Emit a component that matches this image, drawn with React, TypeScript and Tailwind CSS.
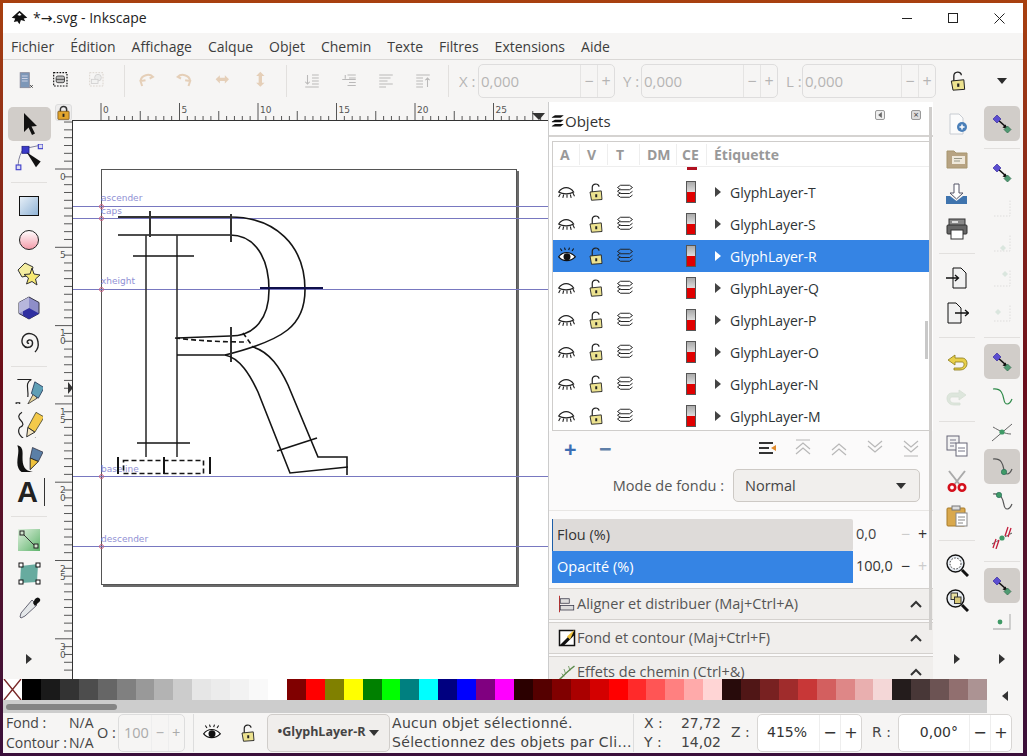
import React from 'react';

const ui = "font-['Open_Sans','Noto_Sans',sans-serif]";
const deja = "font-['DejaVu_Sans',sans-serif]";

function Ico({ size = 24, className = '', children }: { size?: number; className?: string; children: React.ReactNode }) {
  return (
    <svg width={size} height={size} viewBox="0 0 24 24" fill="none" className={className}>
      {children}
    </svg>
  );
}

/* ---- tool icons ---- */
const SelectIcon = () => (
  <Ico><path d="M7 1 L7 20 L11.5 15.5 L15 23 L18 21.5 L14.5 14.5 L20 14 Z" fill="#111" /></Ico>
);
const NodeIcon = () => (
  <Ico size={28}>
    <path d="M8 4 L22 1 M6 6 Q2 14 3 20" stroke="#668" strokeWidth="0.7" />
    <rect x="6" y="2" width="6" height="6" fill="#3a3ac8" stroke="#228" strokeWidth="0.7" />
    <rect x="20" y="0" width="4" height="4" fill="#dde" stroke="#44c" />
    <rect x="1" y="18" width="4" height="4" fill="#dde" stroke="#44c" />
    <path d="M10 7 L22 15 L18 20 Z" fill="#111" />
  </Ico>
);
const RectIcon = () => (
  <Ico>
    <defs>
      <linearGradient id="rg" x1="0" y1="0" x2="1" y2="1"><stop stopColor="#e8f0f8" /><stop offset="1" stopColor="#8fb3d6" /></linearGradient>
    </defs>
    <rect x="2.5" y="2.5" width="19" height="19" fill="url(#rg)" stroke="#111" />
  </Ico>
);
const EllipseIcon = () => (
  <Ico>
    <defs>
      <linearGradient id="eg" x1="0" y1="0" x2="0" y2="1"><stop stopColor="#fff" /><stop offset="1" stopColor="#f39aa8" /></linearGradient>
    </defs>
    <circle cx="12" cy="12" r="9.5" fill="url(#eg)" stroke="#222" />
  </Ico>
);
const StarIcon = () => (
  <Ico>
    <path d="M8 1 L16 5 L14 13 L5 15 L1 8 Z" fill="#f4eda0" stroke="#333" />
    <path d="M15 6 L17 12 L23 13 L18.5 17 L20 23 L15 19.5 L9.5 22 L11.5 16 L7 12.5 L13 12 Z" fill="#f6e873" stroke="#333" />
  </Ico>
);
const BoxIcon = () => (
  <Ico>
    <path d="M12 1 L22 6.5 L22 17.5 L12 23 L2 17.5 L2 6.5 Z" fill="#8e8ec8" stroke="#334" />
    <path d="M12 12 L22 17.5 L12 23 L6 19.5 L6 14 Z" fill="#2f2fa0" />
    <path d="M12 1 L12 12 L2 17.5 L2 6.5 Z" fill="#b7b7dc" />
  </Ico>
);
const SpiralIcon = () => (
  <Ico>
    <path d="M12 13 C10 14 9 11 12 10 C16 9 17 15 13 17 C7 19 3 13 6 7 C10 1 20 3 21 12 C22 17 20 20 18 22" stroke="#222" strokeWidth="1.4" />
  </Ico>
);
const PenIcon = () => (
  <Ico size={28}>
    <path d="M2 3 L14 3 C8 6 12 12 11 18" stroke="#222" />
    <path d="M16 15 L11 24 L19 19 Z" fill="#e8d79c" stroke="#333" strokeWidth="0.7" />
    <path d="M17 5 L25 10 L20 19 L14 15 Z" fill="#5f9fb5" stroke="#235" strokeWidth="0.7" />
    <rect x="1" y="23" width="3" height="3" fill="#fff" stroke="#222" />
    <path d="M4 25 L11 25" stroke="#222" />
  </Ico>
);
const PencilIcon = () => (
  <Ico size={28}>
    <path d="M6 2 Q1 5 5 9 Q9 13 4 15 Q1 20 8 25 Q14 26 18 24" stroke="#222" />
    <path d="M18 2 L25 6 L17 19 L11 15 Z" fill="#f3c94a" stroke="#443" strokeWidth="0.7" />
    <path d="M11 15 L17 19 L10 23 Z" fill="#f5e6c0" stroke="#222" strokeWidth="0.8" />
  </Ico>
);
const CalligraphyIcon = () => (
  <Ico size={28}>
    <path d="M2 1 C10 3 4 12 8 20 C10 24 16 24 22 25 C12 28 2 26 2 16 C2 10 4 6 2 1 Z" fill="#111" />
    <path d="M15 3 L24 7 L20 15 L13 12 Z" fill="#5b7fa6" stroke="#223" strokeWidth="0.6" />
    <path d="M13 12 L20 15 L13 22 Z" fill="#efc23c" stroke="#222" strokeWidth="0.8" />
  </Ico>
);
const TextIcon = () => (
  <div className="relative w-[24px] h-[24px]">
    <span className="font-['Liberation_Sans',sans-serif] text-[29px] font-bold text-[#222] leading-[24px]">A</span>
    <span className="absolute right-[-4px] top-[-2px] w-[1px] h-[28px] bg-[#333]" />
  </div>
);
const GradientIcon = () => (
  <Ico>
    <defs>
      <linearGradient id="gg" x1="0" y1="0" x2="1" y2="1"><stop stopColor="#dff0de" /><stop offset="1" stopColor="#5eb36b" /></linearGradient>
    </defs>
    <rect x="1" y="1" width="22" height="22" fill="url(#gg)" />
    <path d="M5 5 L19 19" stroke="#333" />
    <rect x="3" y="3" width="4" height="4" fill="#cfe3cc" stroke="#222" />
    <rect x="17" y="16" width="4" height="4" fill="#cfe3cc" stroke="#222" />
  </Ico>
);
const MeshIcon = () => (
  <Ico>
    <path d="M4 4 L21 2 L20 20 L3 21 Z" fill="#67ab9f" />
    <rect x="2" y="1" width="4" height="4" fill="#fff" stroke="#111" />
    <rect x="19" y="1" width="4" height="4" fill="#fff" stroke="#111" />
    <rect x="2" y="18" width="4" height="4" fill="#fff" stroke="#111" />
    <rect x="19" y="18" width="4" height="4" fill="#fff" stroke="#111" />
  </Ico>
);
const DropperIcon = () => (
  <Ico>
    <path d="M15 4 L20 9 L8 20 L4 22 L3 21 L4 17 Z" fill="#e4e7e9" stroke="#445" strokeWidth="0.8" />
    <path d="M16 7 L18 3 Q21 0 23 3 Q24 5 21 7 L18 10 Z" fill="#111" />
  </Ico>
);

/* ---- right hand columns ---- */
const NewDocIcon = () => (
  <Ico>
    <path d="M5 2 H14 L18 6 V22 H5 Z" fill="#fbfbfb" stroke="#c8ccd2" />
    <circle cx="17" cy="15" r="5" fill="#4a7fb8" />
    <path d="M14.5 15 H19.5 M17 12.5 V17.5" stroke="#fff" strokeWidth="1.5" />
  </Ico>
);
const OpenIcon = () => (
  <Ico>
    <path d="M2 4 H9 L11 6 H22 V21 H2 Z" fill="#b7a382" stroke="#a8966f" />
    <rect x="7" y="9" width="13" height="8" fill="#efe8da" />
    <path d="M9 11.5 H17 M9 14 H15" stroke="#998" />
  </Ico>
);
const SaveIcon = () => (
  <Ico>
    <path d="M9 2 H14 V11 H18 L11.5 17 L5 11 H9 Z" fill="#fff" stroke="#556" />
    <path d="M1 14 H5 L11.5 19 L18 14 H22 V22 H1 Z" fill="#3f74ae" />
  </Ico>
);
const PrintIcon = () => (
  <Ico>
    <rect x="4" y="2" width="16" height="7" fill="#888" stroke="#333" />
    <rect x="2" y="8" width="20" height="9" rx="1" fill="#666" stroke="#333" />
    <rect x="6" y="13" width="12" height="9" fill="#fff" stroke="#333" />
    <rect x="7" y="4" width="6" height="2" fill="#ddd" />
  </Ico>
);
const ImportIcon = () => (
  <Ico>
    <path d="M8 2 H16 L21 7 V22 H8 Z" fill="#f1f1f1" stroke="#111" />
    <path d="M1 12 H13 M10 9 L13.5 12 L10 15" stroke="#111" strokeWidth="1.3" />
  </Ico>
);
const ExportIcon = () => (
  <Ico>
    <path d="M3 2 H11 L16 7 V22 H3 Z" fill="#f1f1f1" stroke="#111" />
    <path d="M10 12 H23 M20 9 L23.5 12 L20 15" stroke="#111" strokeWidth="1.3" />
  </Ico>
);
const UndoIcon = ({ faded = false }: { faded?: boolean }) => (
  <Ico className={faded ? 'opacity-20 -scale-x-100' : ''}>
    <path d="M10 5 L3 10 L10 15 V12 H17 C20 12 20 18 15 18 H9 V20 H15 C24 20 24 8 17 8 H10 Z" fill={faded ? '#7fae7f' : '#e8cf4a'} stroke={faded ? '#5c8d5c' : '#8a7a18'} strokeWidth="0.8" />
  </Ico>
);
const CopyIcon = () => (
  <Ico>
    <rect x="2" y="2" width="12" height="14" fill="#f2f2f2" stroke="#667" />
    <path d="M5 6 H11 M5 9 H11 M5 12 H9" stroke="#778" />
    <rect x="11" y="9" width="11" height="13" fill="#fff" stroke="#667" />
    <path d="M13 14 H20 M13 17 H20" stroke="#778" />
  </Ico>
);
const CutIcon = () => (
  <Ico>
    <path d="M4 2 L15 16 M20 2 L9 16" stroke="#aaa" strokeWidth="2" />
    <circle cx="7" cy="18.5" r="3.2" fill="#fff" stroke="#d4101c" strokeWidth="2.6" />
    <circle cx="17" cy="18.5" r="3.2" fill="#fff" stroke="#d4101c" strokeWidth="2.6" />
  </Ico>
);
const PasteIcon = () => (
  <Ico>
    <rect x="2" y="4" width="18" height="18" rx="1" fill="#d9a84c" stroke="#a87a28" />
    <rect x="7" y="2" width="8" height="4" fill="#ddd" stroke="#777" />
    <rect x="11" y="9" width="11" height="13" fill="#fff" stroke="#888" />
    <path d="M13 13 H20 M13 16 H20 M13 19 H18" stroke="#888" />
  </Ico>
);
const ZoomFitIcon = () => (
  <Ico>
    <circle cx="10.5" cy="10.5" r="8.5" fill="#e8edf3" stroke="#111" strokeWidth="1.4" />
    <circle cx="10.5" cy="10.5" r="5.5" fill="#fff" stroke="#333" strokeDasharray="1.5 1.5" />
    <path d="M17 17 L23 23" stroke="#111" strokeWidth="3" />
  </Ico>
);
const ZoomObjIcon = () => (
  <Ico>
    <circle cx="10.5" cy="10.5" r="8.5" fill="#e8edf3" stroke="#111" strokeWidth="1.4" />
    <rect x="6" y="5" width="6.5" height="6.5" fill="#e8dfa0" stroke="#333" />
    <rect x="9.5" y="9" width="6.5" height="6.5" fill="#d8c878" stroke="#333" />
    <path d="M17 17 L23 23" stroke="#111" strokeWidth="3" />
  </Ico>
);
const SnapIcon = () => (
  <Ico>
    <path d="M7 7 L16 15" stroke="#111" strokeWidth="1.6" />
    <path d="M17.5 17 L12.5 15.5 L15.5 12.5 Z" fill="#111" />
    <path d="M7 3 L11 7 L7 11 L3 7 Z" fill="#5b4ed0" stroke="#3b2ea0" strokeWidth="0.7" />
    <path d="M17.5 14 L21 17.5 L17.5 21 L14 17.5 Z" fill="#4f9a72" stroke="#2f6a4a" strokeWidth="0.7" />
  </Ico>
);
const FaintSnap = ({ d }: { d: string }) => (
  <Ico className="opacity-30">
    <path d="M4 20 H20 V4" stroke="#aaa" strokeDasharray="1.5 1.5" />
    <path d={d} fill="#9cc4ae" />
  </Ico>
);
const CurveIcon = ({ dot }: { dot?: [number, number] }) => (
  <Ico>
    <path d="M3 4 C12 3 13 10 14 15 C15 20 19 21 22 14" stroke={dot ? '#555' : '#2f8a4a'} strokeWidth="1.2" />
    {dot && <circle cx={dot[0]} cy={dot[1]} r="2.7" fill="#3f9a66" stroke="#265" strokeWidth="0.6" />}
  </Ico>
);
const CrossSnapIcon = () => (
  <Ico>
    <path d="M2 21 L22 4 M3 7 C10 11 15 14 21 14" stroke="#666" />
    <circle cx="12" cy="12" r="2.6" fill="#3f9a66" />
  </Ico>
);
const HashSnapIcon = () => (
  <Ico>
    <path d="M2 19 L22 8" stroke="#555" strokeDasharray="3 2" />
    <circle cx="12" cy="13" r="2.6" fill="#3f9a66" />
    <path d="M6 14 L3 23 M9 15 L6 24 M18 2 L15 11 M21 3 L18 12" stroke="#c21d3a" strokeWidth="1.3" />
  </Ico>
);
const CornerSnapIcon = () => (
  <Ico>
    <path d="M3 20 H20 V5" stroke="#bbb" strokeWidth="1.3" />
    <circle cx="10" cy="13" r="2.4" fill="#3f9a66" />
  </Ico>
);

/* ---- small bits ---- */
const LockOpen = ({ size = 20 }: { size?: number }) => (
  <Ico size={size}>
    <path d="M7 12 V6 C7 0 16 0 16 5" stroke="#222" strokeWidth="1.6" />
    <path d="M4 12 L19 10.5 L20 22 L6 23 Z" fill="#ece28f" stroke="#222" strokeWidth="1.2" />
    <rect x="11" y="15" width="2.6" height="4" fill="#222" />
  </Ico>
);
const LockClosed = () => (
  <Ico size={15}>
    <path d="M7 11 V7 C7 1 17 1 17 7 V11" stroke="#333" strokeWidth="2.4" />
    <rect x="3" y="10" width="18" height="13" rx="1" fill="#e2a52d" stroke="#5c3a08" />
    <rect x="10.5" y="14" width="3" height="5" fill="#222" />
  </Ico>
);
const EyeClosed = () => (
  <Ico size={20}>
    <path d="M2 12 C7 5 15 5 20 12 C15 15 7 15 2 12 Z" fill="#fff" stroke="#222" strokeWidth="1.4" />
    <path d="M4 14 L2 18 M8 15 L7 19 M12 15 L12 19 M16 15 L17 19 M19 13 L21 17" stroke="#222" strokeWidth="1.3" />
  </Ico>
);
const EyeOpen = () => (
  <Ico size={20}>
    <path d="M2 13 C7 6 16 6 22 13 C16 19 7 19 2 13 Z" fill="#fff" stroke="#111" strokeWidth="1.4" />
    <circle cx="12" cy="13" r="4.2" fill="#111" />
    <path d="M6 6 L4 3 M10 5 L9 2 M14 5 L15 2 M18 6 L20 3" stroke="#111" strokeWidth="1.3" />
  </Ico>
);
const LayersIcon = () => (
  <Ico size={18}>
    <path d="M2 6 L6 3 H18 L22 6 L18 9 H6 Z M2 11 L6 8 M22 11 L18 14 H6 L2 11 M2 16 L6 13 M22 16 L18 19 H6 L2 16" fill="none" stroke="#222" strokeWidth="1.3" />
  </Ico>
);
const Tri = ({ dir = 'right', className = '' }: { dir?: 'right' | 'left' | 'down'; className?: string }) => {
  const pts = dir === 'right' ? '2,0 8,5 2,10' : dir === 'left' ? '8,0 2,5 8,10' : '0,2 10,2 5,8';
  return (
    <svg width="10" height="10" viewBox="0 0 10 10" className={className}>
      <polygon points={pts} fill="currentColor" />
    </svg>
  );
};
const Chevron = () => (
  <svg width="12" height="8" viewBox="0 0 12 8" fill="none"><path d="M1 7 L6 2 L11 7" stroke="#333" strokeWidth="2" /></svg>
);

const ToolBtn = ({ h = 34, active = false, children }: { h?: 34 | 35; active?: boolean; children: React.ReactNode }) => (
  <div className={`flex items-center justify-center shrink-0 ${h === 34 ? 'h-[34px] w-[43px]' : 'h-[35px] w-[36px]'} ${active ? 'bg-[#d1cdc9] rounded-[5px]' : ''}`}>
    {children}
  </div>
);
const Sep = () => (
  <div className="h-[14px] shrink-0 flex items-center w-[36px]"><div className="h-[1px] w-full bg-[#e2e0de]" /></div>
);

function Spin({ label, labelW, w }: { label: string; labelW: string; w: string }) {
  return (
    <div className="flex items-center shrink-0 opacity-40">
      <span className={`${labelW} text-[15px] text-[#555] whitespace-nowrap`}>{label}</span>
      <div className={`${w} h-[34px] border border-[#bbb] rounded-[5px] flex items-center text-[15px] text-[#555]`}>
        <span className="flex-1 pl-[2px]">0,000</span>
        <span className="w-[17px] h-full border-l border-[#ccc] flex items-center justify-center text-[16px]">−</span>
        <span className="w-[17px] h-full border-l border-[#ccc] flex items-center justify-center text-[16px]">+</span>
      </div>
    </div>
  );
}

function ToolbarIcon({ children, className = 'w-[36px]' }: { children: React.ReactNode; className?: string }) {
  return <div className={`${className} shrink-0 flex justify-center`}>{children}</div>;
}

/* ---- rulers ---- */
function TopRuler() {
  const ticks = Array.from({ length: 60 }, (_, i) => 101 + i * 7.85);
  return (
    <svg width="476" height="19" viewBox="72 102 476 19" className="block">
      {ticks.map((x, i) => (
        <line key={i} x1={x} x2={x} y1={i % 10 === 0 ? 103 : i % 5 === 0 ? 111 : 116} y2="121" stroke="#444" strokeWidth="0.9" />
      ))}
      {[0, 5, 10, 15, 20, 25].map((n, i) => (
        <text key={n} x={103 + i * 78.5} y="113" fontSize="9" fill="#555" fontFamily="DejaVu Sans">{n}</text>
      ))}
      <path d="M532 113 L545 113 L539 120 Z" fill="#333" />
      <line x1="72" x2="548" y1="120.5" y2="120.5" stroke="#333" />
    </svg>
  );
}

function LeftRuler() {
  const ticks = Array.from({ length: 71 }, (_, i) => 122.02 + i * 7.83);
  return (
    <svg width="18" height="558" viewBox="55 121 18 558" className="block">
      {ticks.map((y, i) => (
        <line key={i} x1={(i - 6) % 10 === 0 ? 55 : 64} x2="72" y1={y} y2={y} stroke="#444" strokeWidth="0.9" />
      ))}
      <text x="60" y="180" fontSize="9" fill="#555" fontFamily="DejaVu Sans">0</text>
      <text x="60" y="258" fontSize="9" fill="#555" fontFamily="DejaVu Sans">5</text>
      {[['1', '0', 325], ['1', '5', 404], ['2', '0', 482], ['2', '5', 561], ['3', '0', 639]].map(([a, b, y]) => (
        <text key={`${a}${b}`} fontSize="9" fill="#555" fontFamily="DejaVu Sans">
          <tspan x="60" y={Number(y) + 11}>{a}</tspan>
          <tspan x="60" y={Number(y) + 19}>{b}</tspan>
        </text>
      ))}
      <path d="M68 382 L73 388 L68 394 Z" fill="#333" />
      <line x1="72.5" x2="72.5" y1="121" y2="679" stroke="#333" />
    </svg>
  );
}

/* ---- the glyph on the page, in page coordinates ---- */
function CanvasDrawing() {
  const guides: [string, number, number][] = [
    ['ascender', 206.5, 201],
    ['caps', 218.5, 214],
    ['xheight', 289.5, 284],
    ['baseline', 476.5, 472],
    ['descender', 546.5, 542],
  ];
  const ink = { stroke: '#151515', fill: 'none' };
  return (
    <svg width="475" height="558" viewBox="73 121 475 558" className="block bg-white">
      <rect x="103" y="171" width="416" height="416" fill="#6a6a6a" />
      <rect x="101.5" y="169.5" width="415" height="415" fill="#fff" stroke="#555" />
      {guides.map(([name, y, ty]) => (
        <g key={name}>
          <line x1="73" x2="548" y1={y} y2={y} stroke="#7878c0" />
          <circle cx="101.5" cy={y} r="2" fill="none" stroke="#cc6688" />
          <text x="101" y={ty} fontSize="9" fill="#9090d4" fontFamily="DejaVu Sans">{name}</text>
        </g>
      ))}
      <g {...ink} strokeWidth="1.6">
        <path d="M118 217 H230" strokeWidth="2.2" stroke="#333" />
        <path d="M230 217 C275 217 305 245 305 290 C305 325 285 340 225 355" />
        <path d="M118 235 H230 C255 235 269 258 269 290 C269 318 255 336 230 336 L177 338" />
        <path d="M146 235 V457 M177 235 V457" stroke="#333" />
        <path d="M133 256 H194 M137 443 H190" />
        <path d="M150 211 V237 M231 214 V242 M231 327 V362" strokeWidth="2" stroke="#333" />
        <path d="M260 288 H323" stroke="#10104a" strokeWidth="2" />
        <path d="M177 355 H225 C240 358 250 375 258 392 L290 473 L348 467" />
        <path d="M253 347 C270 352 280 368 288 385 L318 457 H347 V475" />
        <path d="M277 451 L317 438" />
        <path d="M175 338 C200 341 225 342 247 342 M243 333 L253 347" strokeDasharray="5 3" />
        <rect x="123.5" y="460.5" width="80" height="13" strokeDasharray="5 3" />
        <path d="M118 457 V474 M164 457 V474 M210 457 V474" strokeWidth="2" />
      </g>
    </svg>
  );
}

/* ---- objects panel ---- */
const layers = ['T', 'S', 'R', 'Q', 'P', 'O', 'N', 'M'];

function LayerRow({ name }: { name: string }) {
  const sel = name === 'R';
  return (
    <div className={`flex items-center h-[32px] shrink-0 ${sel ? 'bg-[#3584e4] text-white' : 'text-[#2e3436]'}`}>
      <div className="w-[28px] flex justify-center">{sel ? <EyeOpen /> : <EyeClosed />}</div>
      <div className="w-[29px] flex justify-center"><LockOpen size={18} /></div>
      <div className="w-[29px] flex justify-center"><LayersIcon /></div>
      <div className="w-[37px]" />
      <div className="w-[30px] flex justify-center">
        <div className="w-[10px] h-[22px] border border-[#555] flex flex-col">
          <div className="flex-1 bg-gradient-to-b from-[#aaa] to-[#ddd]" />
          <div className="flex-1 bg-[#e00000]" />
        </div>
      </div>
      <div className={`w-[24px] pl-[7px] ${sel ? 'text-white' : 'text-[#444]'}`}><Tri /></div>
      <span className="text-[14px]">GlyphLayer-{name}</span>
    </div>
  );
}

function Accordion({ icon, label, h = 'h-[32px]' }: { icon: React.ReactNode; label: string; h?: string }) {
  return (
    <div className={`${h} shrink-0 bg-[#f0eeec] border-t border-b border-[#d4d1ce] flex items-center pl-[9px] pr-[11px] text-[#555] text-[14.5px] overflow-hidden`}>
      <span className="mr-[1px]">{icon}</span>
      <span className="flex-1 whitespace-nowrap">{label}</span>
      <Chevron />
    </div>
  );
}

function ObjectsPanel() {
  return (
    <div className={`w-[385px] shrink-0 border-l border-[#ccc] flex flex-col relative overflow-hidden bg-[#f6f5f4] ${ui}`}>
      <div className="h-[35px] shrink-0 flex items-center pl-[1px] pt-[5px] bg-white text-[#333] text-[15px] border-b-2 border-[#d5d3d1]">
        <Ico size={15}><path d="M3 5 L8 2 H22 L17 6 H3 Z M3 12 L8 9 H22 L17 13 H3 Z M3 19 L8 16 H22 L17 20 H3 Z" fill="#111" /></Ico>
        <span>Objets</span>
        <div className="ml-auto flex items-center gap-[26px] pr-[12px] pb-[12px]">
          <div className="w-[10px] h-[10px] border border-[#999] rounded-[2px] bg-[#eee] flex items-center justify-center text-[#666]"><Tri dir="left" className="w-[6px] h-[6px]" /></div>
          <div className="w-[10px] h-[10px] border border-[#999] rounded-[2px] bg-[#ddd] text-[#444] text-[9px] leading-[8px] text-center">×</div>
        </div>
      </div>
      <div className="bg-white pl-[3px] pr-[4px] pt-[4px] pb-0 shrink-0">
        <div className="border border-[#cfcdcb] h-[290px] overflow-hidden bg-white w-[378px]">
          <div className="flex items-center h-[25px] border-b border-[#eee] text-[14px] font-bold text-[#999]">
            <span className="w-[26px] pl-[7px]">A</span>
            <span className="w-[28px] pl-[7px] border-l border-[#eee]">V</span>
            <span className="w-[32px] pl-[8px] border-l border-[#eee]">T</span>
            <span className="w-[37px] pl-[7px] border-l border-[#eee]">DM</span>
            <span className="w-[30px] pl-[5px] border-l border-[#eee]">CE</span>
            <span className="pl-[7px] border-l border-[#eee]">Étiquette</span>
          </div>
          <div className="h-[9px] overflow-hidden">
            <div className="ml-[134px] w-[10px] h-[3px] bg-[#b01020]" />
          </div>
          {layers.map((l) => <LayerRow key={l} name={l} />)}
        </div>
      </div>
      <div className="flex-1 min-h-0 flex flex-col bg-[#fbfafa] text-[#444]">
        <div className="h-[34px] shrink-0 flex items-center pl-[15px] pr-[10px]">
          <span className="w-[35px] text-[#3c6eb4] text-[22px] font-bold leading-none">+</span>
          <span className="text-[#5f7fa8] text-[22px] font-bold leading-none">−</span>
          <div className="ml-auto flex items-center gap-[12px]">
            <Ico><path d="M4 7 H18 M4 12 H14 M4 17 H18" stroke="#333" strokeWidth="2" /><path d="M21 9 L16 12 L21 15 Z" fill="#e08a2c" /></Ico>
            <Ico className="opacity-50"><path d="M5 4 H19 M5 13 L12 7 L19 13 M5 18 L12 12 L19 18" stroke="#777" strokeWidth="1.2" /></Ico>
            <Ico className="opacity-50"><path d="M5 14 L12 8 L19 14 M5 19 L12 13 L19 19" stroke="#777" strokeWidth="1.2" /></Ico>
            <Ico className="opacity-50"><path d="M5 5 L12 11 L19 5 M5 10 L12 16 L19 10" stroke="#777" strokeWidth="1.2" /></Ico>
            <Ico className="opacity-50"><path d="M5 5 L12 11 L19 5 M5 10 L12 16 L19 10 M5 20 H19" stroke="#777" strokeWidth="1.2" /></Ico>
          </div>
        </div>
        <div className="shrink-0 flex items-center justify-end pr-[13px] pb-[8px] mt-[4px] border-b border-[#e8e6e4]">
          <span className="text-[#555] text-[14.5px] mr-[9px]">Mode de fondu :</span>
          <div className="w-[187px] h-[33px] border border-[#cdc9c5] rounded-[5px] bg-[#f1efed] flex items-center pl-[11px] pr-[13px]">
            <span className="flex-1 text-[14.5px]">Normal</span>
            <Tri dir="down" className="text-[#333]" />
          </div>
        </div>
        <div className="pl-[3px] pt-[8px] flex flex-col shrink-0">
          <div className="flex h-[32px]">
            <div className="w-[301px] shrink-0 bg-[#dedbd9] border-l border-[#1c5ea8] rounded-r-[2px] flex items-center pl-[4px] text-[14.5px] text-[#333]">Flou (%)</div>
            <span className="w-[44px] shrink-0 pl-[3px] text-[14.5px] leading-[30px]">0,0</span>
            <span className="w-[17px] text-center text-[#ccc] text-[16px] leading-[30px]">−</span>
            <span className="w-[17px] text-center text-[#333] text-[16px] leading-[30px]">+</span>
          </div>
          <div className="flex h-[32px]">
            <div className="w-[301px] shrink-0 bg-[#3584e4] flex items-center pl-[5px] text-[14.5px] text-white">Opacité (%)</div>
            <span className="w-[44px] shrink-0 pl-[3px] text-[14.5px] leading-[30px] text-[#333]">100,0</span>
            <span className="w-[17px] text-center text-[#333] text-[16px] leading-[30px]">−</span>
            <span className="w-[17px] text-center text-[#ccc] text-[16px] leading-[30px]">+</span>
          </div>
        </div>
        <div className="flex flex-col gap-[2px] mt-[5px]">
          <Accordion
            label="Aligner et distribuer (Maj+Ctrl+A)"
            icon={<Ico size={18}><path d="M2 1 V23" stroke="#b33" strokeWidth="1.4" /><rect x="3" y="5" width="12" height="6" fill="#ddd" stroke="#334" /><rect x="3" y="14" width="18" height="6" fill="#ddd" stroke="#334" /></Ico>}
          />
          <Accordion
            label="Fond et contour (Maj+Ctrl+F)"
            icon={<Ico size={18}><rect x="2" y="2" width="20" height="20" fill="#fff" stroke="#111" strokeWidth="2" /><path d="M2 22 L22 2 V8 L8 22 Z" fill="#111" /><path d="M12 10 L22 1 L16 14 Z" fill="#efc23c" /></Ico>}
          />
          <Accordion
            label="Effets de chemin (Ctrl+&)"
            h="h-[32px]"
            icon={<Ico size={18}><path d="M2 22 C8 16 14 10 22 4" stroke="#5a8a4a" strokeWidth="2" /><path d="M8 8 L10 14 M14 4 L16 10 M5 14 L8 18" stroke="#5a8a4a" /></Ico>}
          />
        </div>
      </div>
      {/* panel scrollbars lie over the content */}
      <div className="absolute right-[1px] top-[5px] bottom-[49px] w-[3px] bg-[#d0cecc]" />
      <div className="absolute right-[5px] top-[219px] h-[38px] w-[3px] bg-[#c8c8c8]" />
    </div>
  );
}

const palette = [
  '#000000', '#1a1a1a', '#333333', '#4d4d4d', '#666666', '#808080', '#999999', '#b3b3b3', '#cccccc', '#e6e6e6', '#ececec', '#f2f2f2', '#f9f9f9', '#ffffff',
  '#800000', '#ff0000', '#808000', '#ffff00', '#008000', '#00ff00', '#008080', '#00ffff', '#000080', '#0000ff', '#800080', '#ff00ff',
  '#2b0000', '#550000', '#800000', '#aa0000', '#d40000', '#ff0000', '#ff2a2a', '#ff5555', '#ff8080', '#ffaaaa', '#ffd5d5',
  '#280b0b', '#501616', '#782121', '#a02c2c', '#c83737', '#d35f5f', '#de8787', '#e9afaf', '#f4d7d7',
  '#241c1c', '#483737', '#6c5353', '#916f6f', '#ac9393',
];

const menus = ['Fichier', 'Édition', 'Affichage', 'Calque', 'Objet', 'Chemin', 'Texte', 'Filtres', 'Extensions', 'Aide'];

export default function App() {
  return (
    <div className={`w-[1027px] h-[756px] overflow-hidden pt-[3px] pl-[3px] bg-gradient-to-b from-[#a8400f] via-[#6b0d1a] to-[#3a0f3a] ${ui}`}>
      <div className="w-[1020px] h-[750px] flex flex-col bg-[#f6f5f4] overflow-hidden">
        {/* title bar */}
        <div className="h-[30px] shrink-0 bg-white flex items-center pl-[8px] text-[14px] text-[#222]">
          <Ico size={17}><path d="M12 1 L23 11 L18 12 L20 16 L14 14 L12 20 L9 16 L4 17 L6 12 L1 11 Z" fill="#111" /><path d="M9 7 L12 4 L15 7 L12 8 Z" fill="#fff" /></Ico>
          <span className="ml-[5px]">*<span className={deja}>→</span>.svg - Inkscape</span>
          <div className="ml-auto flex items-center gap-[36px] pr-[18px]">
            <div className="w-[10px] h-[1px] bg-[#222]" />
            <div className="w-[10px] h-[10px] border border-[#222]" />
            <svg width="11" height="11" viewBox="0 0 11 11"><path d="M0.5 0.5 L10.5 10.5 M10.5 0.5 L0.5 10.5" stroke="#222" /></svg>
          </div>
        </div>
        {/* menu bar */}
        <div className="h-[27px] shrink-0 flex items-center gap-[16px] pl-[8px] border-b border-[#dad8d6] text-[14px] text-[#3d3d3d]">
          {menus.map((m) => <span key={m}>{m}</span>)}
        </div>
        {/* command bar */}
        <div className="h-[42px] shrink-0 flex items-center pl-[5px]">
          <ToolbarIcon><Ico size={20}><rect x="5" y="2" width="11" height="18" fill="#7d97b8" stroke="#889" /><path d="M7 6 H14 M7 9 H14 M7 12 H14" stroke="#dde" /><path d="M17 17 L20 20 M20 17 L17 20" stroke="#222" /></Ico></ToolbarIcon>
          <ToolbarIcon><Ico size={20}><rect x="2" y="2" width="16" height="16" fill="none" stroke="#111" strokeDasharray="2 1.5" strokeWidth="1.4" /><rect x="5" y="6" width="10" height="8" rx="2" fill="#bbb" stroke="#333" /><path d="M5 10 H15" stroke="#333" /></Ico></ToolbarIcon>
          <ToolbarIcon><Ico size={20} className="opacity-40"><rect x="2" y="2" width="16" height="16" fill="none" stroke="#a98" strokeDasharray="2 1.5" /><circle cx="12" cy="8" r="4" fill="#ddd" stroke="#999" /><rect x="4" y="10" width="8" height="5" fill="#eee" stroke="#999" /></Ico></ToolbarIcon>
          <div className="w-[1px] h-[32px] bg-[#e2e0de] ml-[8px] mr-[5px] shrink-0" />
          <div className="flex gap-[2px] opacity-30">
            <ToolbarIcon><Ico size={20}><path d="M3 12 C4 4 14 3 18 7 L14 9 M5 18 L3 12 L9 11" stroke="#c07a30" strokeWidth="2.4" /></Ico></ToolbarIcon>
            <ToolbarIcon><Ico size={20}><path d="M17 12 C16 4 6 3 2 7 L6 9 M15 18 L17 12 L11 11" stroke="#c07a30" strokeWidth="2.4" /></Ico></ToolbarIcon>
            <ToolbarIcon><Ico size={20}><path d="M2 10 L7 5 V8 H13 V5 L18 10 L13 15 V12 H7 V15 Z" fill="#c07a30" /></Ico></ToolbarIcon>
            <ToolbarIcon><Ico size={20}><path d="M10 1 L15 6 H12 V14 H15 L10 19 L5 14 H8 V6 H5 Z" fill="#c07a30" /></Ico></ToolbarIcon>
          </div>
          <div className="w-[1px] h-[32px] bg-[#e2e0de] ml-[6px] mr-[7px] shrink-0" />
          <div className="flex gap-[1px] opacity-30">
            <ToolbarIcon><Ico size={18}><path d="M12 4 H21 M12 8 H21 M12 12 H21 M12 16 H21 M3 20 H21 M6 4 V16 M3 13 L6 16 L9 13" stroke="#333" strokeWidth="1.4" /></Ico></ToolbarIcon>
            <ToolbarIcon><Ico size={18}><path d="M10 4 H21 M12 8 H21 M3 10 H21 M12 14 H21 M10 18 H21 M7 4 V9" stroke="#333" strokeWidth="1.4" /></Ico></ToolbarIcon>
            <ToolbarIcon><Ico size={18}><path d="M3 4 H21 M3 8 H18 M3 12 H14 M3 16 H21 M3 20 H12" stroke="#333" strokeWidth="1.4" /></Ico></ToolbarIcon>
            <ToolbarIcon><Ico size={18}><path d="M3 4 H21 M3 8 H12 M3 12 H12 M3 16 H12 M3 20 H12 M18 20 V8 M15 11 L18 8 L21 11" stroke="#333" strokeWidth="1.4" /></Ico></ToolbarIcon>
          </div>
          <div className="w-[1px] h-[32px] bg-[#e2e0de] ml-[7px] mr-[10px] shrink-0" />
          <div className="flex items-center gap-[8px] shrink-0">
            <Spin label="X :" labelW="w-[19px]" w="w-[137px]" />
            <Spin label="Y :" labelW="w-[18px]" w="w-[137px]" />
            <Spin label="L :" labelW="w-[16px]" w="w-[134px]" />
          </div>
          <div className="w-[44px] flex justify-center shrink-0"><LockOpen /></div>
          <div className="w-[44px] flex justify-center text-[#2b2b2b] shrink-0"><Tri dir="down" /></div>
        </div>
        {/* main area */}
        <div className="h-[577px] shrink-0 flex">
          <div className="w-[52px] shrink-0 flex flex-col items-center pt-[5px] pb-[3px]">
            <ToolBtn active><SelectIcon /></ToolBtn>
            <ToolBtn><NodeIcon /></ToolBtn>
            <Sep />
            <ToolBtn><RectIcon /></ToolBtn>
            <ToolBtn><EllipseIcon /></ToolBtn>
            <ToolBtn><StarIcon /></ToolBtn>
            <ToolBtn><BoxIcon /></ToolBtn>
            <ToolBtn><SpiralIcon /></ToolBtn>
            <Sep />
            <ToolBtn><PenIcon /></ToolBtn>
            <ToolBtn><PencilIcon /></ToolBtn>
            <ToolBtn><CalligraphyIcon /></ToolBtn>
            <ToolBtn><TextIcon /></ToolBtn>
            <Sep />
            <ToolBtn><GradientIcon /></ToolBtn>
            <ToolBtn><MeshIcon /></ToolBtn>
            <ToolBtn><DropperIcon /></ToolBtn>
            <div className="mt-auto h-[34px] flex items-center text-[#333]"><Tri /></div>
          </div>
          <div className="w-[493px] shrink-0 flex flex-col bg-[#f6f5f4]">
            <div className="flex h-[19px] shrink-0">
              <div className="w-[17px] flex items-end justify-center"><div className="bg-[#eeeded] rounded-[3px] border border-[#ddd] flex"><LockClosed /></div></div>
              <TopRuler />
            </div>
            <div className="flex">
              <LeftRuler />
              <CanvasDrawing />
            </div>
          </div>
          <ObjectsPanel />
          <div className="w-[47px] shrink-0 flex flex-col items-center pt-[4px] pb-[3px]">
            <ToolBtn h={35}><NewDocIcon /></ToolBtn>
            <ToolBtn h={35}><OpenIcon /></ToolBtn>
            <ToolBtn h={35}><SaveIcon /></ToolBtn>
            <ToolBtn h={35}><PrintIcon /></ToolBtn>
            <Sep />
            <ToolBtn h={35}><ImportIcon /></ToolBtn>
            <ToolBtn h={35}><ExportIcon /></ToolBtn>
            <Sep />
            <ToolBtn h={35}><UndoIcon /></ToolBtn>
            <ToolBtn h={35}><UndoIcon faded /></ToolBtn>
            <Sep />
            <ToolBtn h={35}><CopyIcon /></ToolBtn>
            <ToolBtn h={35}><CutIcon /></ToolBtn>
            <ToolBtn h={35}><PasteIcon /></ToolBtn>
            <Sep />
            <ToolBtn h={35}><ZoomFitIcon /></ToolBtn>
            <ToolBtn h={35}><ZoomObjIcon /></ToolBtn>
            <div className="mt-auto h-[34px] flex items-center text-[#333]"><Tri /></div>
          </div>
          <div className="w-[43px] shrink-0 flex flex-col items-center pt-[4px] pb-[3px]">
            <ToolBtn h={35} active><SnapIcon /></ToolBtn>
            <Sep />
            <ToolBtn h={35}><SnapIcon /></ToolBtn>
            <ToolBtn h={35}><FaintSnap d="M0 0" /></ToolBtn>
            <ToolBtn h={35}><FaintSnap d="M13 14 L16 17 L13 20 L10 17 Z" /></ToolBtn>
            <ToolBtn h={35}><FaintSnap d="M15 5 L18 8 L15 11 L12 8 Z" /></ToolBtn>
            <ToolBtn h={35}><FaintSnap d="M8 8 L11 11 L8 14 L5 11 Z" /></ToolBtn>
            <Sep />
            <ToolBtn h={35} active><SnapIcon /></ToolBtn>
            <ToolBtn h={35}><CurveIcon /></ToolBtn>
            <ToolBtn h={35}><CrossSnapIcon /></ToolBtn>
            <ToolBtn h={35} active><CurveIcon dot={[14, 17]} /></ToolBtn>
            <ToolBtn h={35}><CurveIcon dot={[9, 5]} /></ToolBtn>
            <ToolBtn h={35}><HashSnapIcon /></ToolBtn>
            <Sep />
            <ToolBtn h={35} active><SnapIcon /></ToolBtn>
            <ToolBtn h={35}><CornerSnapIcon /></ToolBtn>
            <div className="mt-auto h-[34px] flex items-center text-[#333]"><Tri /></div>
          </div>
        </div>
        {/* palette and scrollbar */}
        <div className="h-[34px] shrink-0 flex">
          <div className="w-[984px] flex flex-col">
            <div className="h-[21px] flex">
              <div className="w-[19px] shrink-0 bg-white">
                <svg width="19" height="21" viewBox="0 0 19 21"><path d="M1 0 L18 21 M18 0 L1 21" stroke="#7a2a2a" strokeWidth="1.4" /></svg>
              </div>
              {palette.map((c, i) => <div key={i} className="flex-1" style={{ backgroundColor: c }} />)}
            </div>
            <div className="h-[13px] bg-[#cdcdcd] flex items-center pl-[3px]">
              <div className="w-[111px] h-[6px] rounded-full bg-[#858585]" />
            </div>
          </div>
          <div className="flex-1 flex items-center justify-center text-[#333]"><Tri dir="left" /></div>
        </div>
        {/* status bar */}
        <div className="h-[39px] shrink-0 flex items-center text-[#444] overflow-hidden">
          <div className="w-[94px] shrink-0 pl-[3px] text-[14px] leading-[20px] whitespace-nowrap">
            <div className="flex"><span className="w-[63px]">Fond :</span><span>N/A</span></div>
            <div className="flex"><span className="w-[63px]">Contour :</span><span>N/A</span></div>
          </div>
          <span className="text-[14.5px] w-[21px] shrink-0 whitespace-nowrap">O :</span>
          <div className="w-[67px] h-[38px] shrink-0 border border-[#ddd] rounded-[5px] flex items-center text-[14.5px] text-[#aaa]">
            <span className="w-[33px] pl-[5px]">100</span>
            <span className="w-[17px] h-full flex items-center justify-center border-l border-[#eee]">−</span>
            <span className="w-[17px] h-full flex items-center justify-center border-l border-[#eee]">+</span>
          </div>
          <div className="w-[1px] h-[38px] bg-[#ddd] ml-[8px] shrink-0" />
          <div className="w-[36px] flex justify-center shrink-0"><EyeOpen /></div>
          <div className="w-[36px] flex justify-center shrink-0"><LockOpen size={18} /></div>
          <div className="w-[123px] h-[38px] shrink-0 border border-[#d0cdca] rounded-[5px] bg-[#f0eeec] flex items-center justify-center gap-[4px] text-[12.5px] font-bold text-[#444] ml-[1px]">
            <span>•GlyphLayer-R</span>
            <Tri dir="down" className="text-[#333]" />
          </div>
          <div className={`w-[241px] ml-[2px] shrink-0 text-[14px] leading-[19px] tracking-[0.32px] whitespace-nowrap ${deja}`}>
            <div>Aucun objet sélectionné.</div>
            <div>Sélectionnez des objets par Cli...</div>
          </div>
          <div className="w-[1px] h-[38px] bg-[#ddd] shrink-0" />
          <div className={`w-[88px] shrink-0 pl-[10px] pr-[1px] text-[14px] leading-[19px] ${deja}`}>
            <div className="flex justify-between"><span>X :</span><span>27,72</span></div>
            <div className="flex justify-between"><span>Y :</span><span>14,02</span></div>
          </div>
          <span className={`w-[35px] shrink-0 pl-[9px] text-[14px] ${deja}`}>Z :</span>
          <div className={`w-[105px] h-[38px] shrink-0 bg-white border border-[#d8d6d4] rounded-[5px] flex items-center text-[14px] text-[#333] ${deja}`}>
            <span className="flex-1 pl-[9px]">415%</span>
            <span className="w-[21px] h-full flex items-center justify-center border-l border-[#eee] text-[16px]">−</span>
            <span className="w-[21px] h-full flex items-center justify-center border-l border-[#eee] text-[16px]">+</span>
          </div>
          <span className={`w-[36px] shrink-0 pl-[10px] text-[14px] ${deja}`}>R :</span>
          <div className={`w-[114px] h-[38px] shrink-0 bg-white border border-[#d8d6d4] rounded-[5px] flex items-center text-[14px] text-[#333] ${deja}`}>
            <span className="flex-1 text-right pr-[11px]">0,00°</span>
            <span className="w-[21px] h-full flex items-center justify-center border-l border-[#eee] text-[16px]">−</span>
            <span className="w-[21px] h-full flex items-center justify-center border-l border-[#eee] text-[16px]">+</span>
          </div>
        </div>
      </div>
    </div>
  );
}
